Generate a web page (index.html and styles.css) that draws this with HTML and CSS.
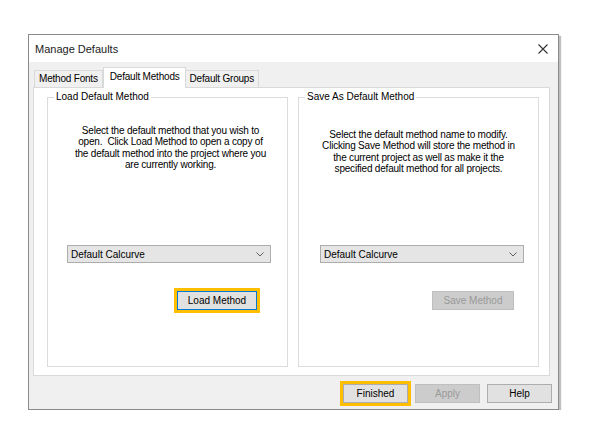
FILE: index.html
```html
<!DOCTYPE html>
<html>
<head>
<meta charset="utf-8">
<title>Manage Defaults</title>
<link rel="stylesheet" href="styles.css">
</head>
<body>
<div class="dialog">
  <div class="titlebar">
    <span class="title">Manage Defaults</span>
    <svg class="close" width="10" height="10" viewBox="0 0 10 10"><path d="M0.5 0.5 L9.5 9.5 M9.5 0.5 L0.5 9.5" stroke="#333" stroke-width="1.1" fill="none"/></svg>
  </div>
  <div class="content">
    <div class="tabs">
      <div class="tab">Method Fonts</div>
      <div class="tab selected">Default Methods</div>
      <div class="tab">Default Groups</div>
    </div>
    <div class="tabpage">
      <div class="group">
        <span class="legend">Load Default Method</span>
        <div class="desc desc-left">Select the default method that you wish to<br>open.&nbsp; Click Load Method to open a copy of<br>the default method into the project where you<br>are currently working.</div>
        <div class="combo combo-left"><span>Default Calcurve</span><svg width="8" height="5" viewBox="0 0 8 5"><path d="M0.5 0.5 L4 4 L7.5 0.5" stroke="#606060" stroke-width="1" fill="none"/></svg></div>
        <div class="btn-row row-left"><div class="btn focus default">Load Method</div></div>
      </div>
      <div class="group">
        <span class="legend">Save As Default Method</span>
        <div class="desc desc-right">Select the default method name to modify.<br>Clicking Save Method will store the method in<br>the current project as well as make it the<br>specified default method for all projects.</div>
        <div class="combo combo-right"><span>Default Calcurve</span><svg width="8" height="5" viewBox="0 0 8 5"><path d="M0.5 0.5 L4 4 L7.5 0.5" stroke="#606060" stroke-width="1" fill="none"/></svg></div>
        <div class="btn-row row-right"><div class="btn disabled save">Save Method</div></div>
      </div>
    </div>
  </div>
  <div class="buttons">
    <div class="btn focus">Finished</div>
    <div class="btn disabled">Apply</div>
    <div class="btn">Help</div>
  </div>
</div>
</body>
</html>
```
FILE: styles.css
```css
html, body {
  margin: 0;
  padding: 0;
  background: #ffffff;
}
body {
  padding: 34px 0 0 28px;
  font-family: "Liberation Sans", Arial, sans-serif;
  font-size: 10px;
  color: #000;
}
.dialog {
  width: 529px;
  height: 374px;
  border: 1px solid #8a8a8a;
  background: #f0f0f0;
  box-shadow: 2px 2px 1px rgba(0,0,0,0.25);
  display: flex;
  flex-direction: column;
}
.titlebar {
  height: 27px;
  background: #fff;
  display: flex;
  align-items: center;
  padding: 0 10px 0 6px;
}
.title {
  font-size: 11px;
  flex: 1;
  color: #1a1a1a;
}
.close {
  display: block;
  margin-top: 1px;
}
.content {
  padding: 6px 8px 0 4px;
}
.tabs {
  display: flex;
  align-items: flex-end;
  height: 20px;
  margin-left: 1px;
  position: relative;
  z-index: 1;
  margin-bottom: -1px;
}
.tab {
  height: 16px;
  line-height: 16px;
  padding: 0 4px;
  letter-spacing: -0.2px;
  border: 1px solid #d9d9d9;
  border-bottom: none;
  background: #f0f0f0;
  margin-bottom: 1px;
}
.tab + .tab {
  border-left: none;
}
.tab.selected {
  height: 20px;
  line-height: 17px;
  background: #fff;
  margin-bottom: 0;
  border-left: 1px solid #d9d9d9;
  border-right: 1px solid #d9d9d9;
  padding: 0 5px 0 6px;
}
.tab.selected + .tab {
  border-left: none;
}
.tabpage {
  height: 276px;
  border: 1px solid #d9d9d9;
  background: #fff;
  padding: 9px 10px 2px 13px;
  display: grid;
  grid-template-columns: 241px 241px;
  column-gap: 10px;
}
.group {
  position: relative;
  border: 1px solid #dcdcdc;
  height: 268px;
}
.legend {
  position: absolute;
  top: -7px;
  left: 6px;
  padding: 0 2px;
  background: #fff;
  line-height: 12px;
}
.desc {
  height: 147px;
  box-sizing: border-box;
  text-align: center;
  line-height: 11.4px;
  letter-spacing: -0.2px;
}
.desc-left {
  padding: 27px 0 0 6px;
}
.desc-right {
  padding: 31px 0 0 0;
}
.combo {
  height: 16px;
  border: 1px solid #adadad;
  background: #e5e5e5;
  display: flex;
  align-items: center;
  justify-content: space-between;
  padding: 0 6px 0 3px;
  box-sizing: content-box;
  width: 193px;
}
.combo svg {
  display: block;
}
.combo-left {
  margin-left: 19px;
}
.combo-right {
  margin-left: 21px;
}
.btn-row {
  margin-top: 28px;
  display: flex;
}
.row-left {
  padding-left: 129px;
}
.row-right {
  padding-left: 133px;
}
.btn {
  height: 17px;
  line-height: 17px;
  width: 63px;
  text-align: center;
  border: 1px solid #adadad;
  background: #e1e1e1;
}
.btn.default {
  width: 78px;
  border-color: #0078d7;
}
.btn.save {
  width: 80px;
}
.btn.disabled {
  background: #cccccc;
  border-color: #bfbfbf;
  color: #9a9a9a;
}
.btn.focus {
  outline: 3px solid #ffbf00;
  outline-offset: 0px;
}
.buttons {
  display: flex;
  justify-content: flex-end;
  gap: 7px;
  padding: 8px 6px 0 0;
}
```
